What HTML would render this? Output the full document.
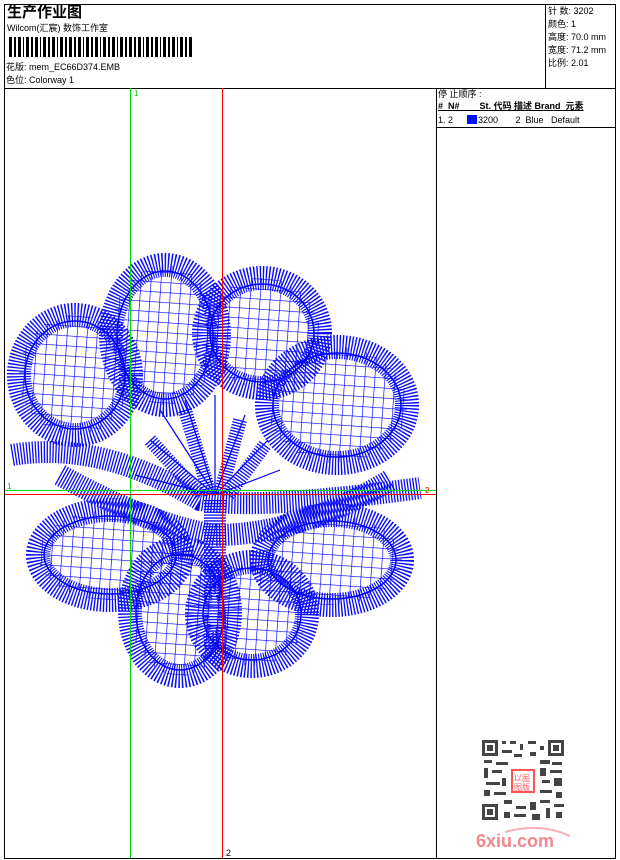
<!DOCTYPE html>
<html><head><meta charset="utf-8"><style>
*{margin:0;padding:0}
body{width:620px;height:860px;background:#fff;position:relative;overflow:hidden;font-family:"Liberation Sans","Noto Sans CJK SC",sans-serif;color:#000}
.t{position:absolute;white-space:nowrap;font-size:9px;line-height:11px}
.l{position:absolute;background:#000}
</style></head><body>
<div class="l" style="left:4px;top:4px;width:612px;height:1px"></div>
<div class="l" style="left:4px;top:4px;width:1px;height:855px"></div>
<div class="l" style="left:615px;top:4px;width:1px;height:855px"></div>
<div class="l" style="left:4px;top:858px;width:612px;height:1px"></div>
<div class="l" style="left:4px;top:88px;width:612px;height:1px"></div>
<div class="l" style="left:545px;top:4px;width:1px;height:84px"></div>
<div class="l" style="left:436px;top:88px;width:1px;height:771px"></div>
<div class="l" style="left:436px;top:127px;width:180px;height:1px"></div>

<div class="t" style="left:7px;top:4px;font-size:15px;line-height:17px;font-weight:bold">生产作业图</div>
<div class="t" style="left:7px;top:23px">Wilcom(汇宸) 数饰工作室</div>
<svg style="position:absolute;left:9px;top:37px" width="185" height="20">
<g fill="#000">
<rect x="0" y="0" width="3" height="20"/><rect x="5" y="0" width="2" height="20"/><rect x="9" y="0" width="3" height="20"/><rect x="14" y="0" width="1" height="20"/><rect x="17" y="0" width="3" height="20"/><rect x="22" y="0" width="2" height="20"/><rect x="26" y="0" width="3" height="20"/><rect x="31" y="0" width="1" height="20"/><rect x="34" y="0" width="3" height="20"/><rect x="39" y="0" width="2" height="20"/><rect x="43" y="0" width="3" height="20"/><rect x="48" y="0" width="1" height="20"/><rect x="51" y="0" width="3" height="20"/><rect x="56" y="0" width="2" height="20"/><rect x="60" y="0" width="3" height="20"/><rect x="65" y="0" width="2" height="20"/><rect x="69" y="0" width="3" height="20"/><rect x="74" y="0" width="1" height="20"/><rect x="77" y="0" width="3" height="20"/><rect x="82" y="0" width="2" height="20"/><rect x="86" y="0" width="3" height="20"/><rect x="91" y="0" width="1" height="20"/><rect x="94" y="0" width="3" height="20"/><rect x="99" y="0" width="2" height="20"/><rect x="103" y="0" width="3" height="20"/><rect x="108" y="0" width="1" height="20"/><rect x="111" y="0" width="3" height="20"/><rect x="116" y="0" width="2" height="20"/><rect x="120" y="0" width="3" height="20"/><rect x="125" y="0" width="2" height="20"/><rect x="129" y="0" width="3" height="20"/><rect x="134" y="0" width="1" height="20"/><rect x="137" y="0" width="3" height="20"/><rect x="142" y="0" width="2" height="20"/><rect x="146" y="0" width="3" height="20"/><rect x="151" y="0" width="1" height="20"/><rect x="154" y="0" width="3" height="20"/><rect x="159" y="0" width="2" height="20"/><rect x="163" y="0" width="3" height="20"/><rect x="168" y="0" width="1" height="20"/><rect x="171" y="0" width="3" height="20"/><rect x="176" y="0" width="2" height="20"/><rect x="180" y="0" width="3" height="20"/>
</g></svg>
<div class="t" style="left:6px;top:62px">花版: mem_EC66D374.EMB</div>
<div class="t" style="left:6px;top:75px">色位: Colorway 1</div>

<div class="t" style="left:548px;top:5px;line-height:13px">针 数: 3202<br>颜色: 1<br>高度: 70.0 mm<br>宽度: 71.2 mm<br>比例: 2.01</div>

<div class="t" style="left:438px;top:89px">停 止顺序 :</div>
<div class="t" style="left:438px;top:101px;font-weight:bold;text-decoration:underline">#&nbsp;&nbsp;N#&nbsp;&nbsp;&nbsp;&nbsp;&nbsp;&nbsp;&nbsp;&nbsp;St.&nbsp;代码 描述 Brand&nbsp;&nbsp;元素</div>
<div class="t" style="left:438px;top:115px">1.&nbsp;2</div>
<div style="position:absolute;left:467px;top:115px;width:10px;height:9px;background:#0010ff"></div>
<div class="t" style="left:478px;top:115px">3200&nbsp;&nbsp;&nbsp;&nbsp;&nbsp;&nbsp;&nbsp;2&nbsp; Blue&nbsp;&nbsp; Default</div>

<svg style="position:absolute;left:0;top:0" width="620" height="860">
<defs>
<pattern id="g" width="10" height="10" patternUnits="userSpaceOnUse" patternTransform="rotate(4)">
<path d="M0 0H10M0 0V10" stroke="#0000ff" stroke-width="1.3" fill="none"/>
</pattern>
</defs>
<g fill="url(#g)" stroke="#0a0aff" stroke-width="24" stroke-dasharray="1.3 1.6">
<ellipse cx="75" cy="375" rx="56" ry="60"/>
<ellipse cx="165" cy="335" rx="54" ry="70"/>
<ellipse cx="262" cy="333" rx="58" ry="55"/>
<ellipse cx="337" cy="405" rx="70" ry="58"/>
<ellipse cx="110" cy="555" rx="72" ry="45"/>
<ellipse cx="180" cy="612" rx="50" ry="64"/>
<ellipse cx="252" cy="614" rx="55" ry="52"/>
<ellipse cx="332" cy="560" rx="70" ry="45"/>
</g>
<g fill="none" stroke="#0000ff" stroke-width="1.5">
<ellipse cx="75" cy="375" rx="50" ry="54"/>
<ellipse cx="165" cy="335" rx="48" ry="64"/>
<ellipse cx="262" cy="333" rx="52" ry="49"/>
<ellipse cx="337" cy="405" rx="64" ry="52"/>
<ellipse cx="110" cy="555" rx="66" ry="39"/>
<ellipse cx="180" cy="612" rx="44" ry="58"/>
<ellipse cx="252" cy="614" rx="49" ry="46"/>
<ellipse cx="332" cy="560" rx="64" ry="39"/>
</g>
<g fill="none" stroke="#0a0aff" stroke-width="22" stroke-dasharray="1.3 1.6">
<path d="M12 455 Q100 440 200 500 Q260 510 420 488"/>
<path d="M60 475 Q150 525 215 535 Q300 535 390 480"/>
<path d="M215 500 V650"/>
</g>
<g stroke="#0000ff" stroke-width="1.2">
<path d="M215 495 L150 440 M215 495 L160 410 M215 495 L185 400 M215 495 L215 395 M215 495 L245 415 M215 495 L268 440 M215 495 L280 470 M215 495 L135 475"/>
</g>
<g stroke="#0a0aff" stroke-width="14" stroke-dasharray="1.3 1.6" fill="none">
<path d="M150 440 L200 495 M185 410 L210 495 M240 420 L220 495 M265 445 L228 495"/>
</g>
<line x1="130.5" y1="88" x2="130.5" y2="858" stroke="#00e000"/>
<line x1="222.5" y1="88" x2="222.5" y2="858" stroke="#ff0000"/>
<line x1="5" y1="490.5" x2="436" y2="490.5" stroke="#00e000"/>
<line x1="5" y1="494.5" x2="436" y2="494.5" stroke="#ff0000"/>
<text x="134" y="96" font-size="8" fill="#00c000" font-family="Liberation Sans">1</text>
<text x="7" y="489" font-size="8" fill="#00c000" font-family="Liberation Sans">1</text>
<text x="425" y="493" font-size="8" fill="#ff0000" font-family="Liberation Sans">2</text>
<text x="226" y="856" font-size="9" fill="#000" font-family="Liberation Sans">2</text>
<g fill="#444">
<rect x="482" y="740" width="82" height="80" fill="#fff"/>
<rect x="482" y="740" width="16" height="16"/><rect x="485" y="743" width="10" height="10" fill="#fff"/><rect x="487" y="745" width="6" height="6"/>
<rect x="548" y="740" width="16" height="16"/><rect x="551" y="743" width="10" height="10" fill="#fff"/><rect x="553" y="745" width="6" height="6"/>
<rect x="482" y="804" width="16" height="16"/><rect x="485" y="807" width="10" height="10" fill="#fff"/><rect x="487" y="809" width="6" height="6"/>
<rect x="502" y="741" width="4" height="3"/><rect x="510" y="741" width="6" height="3"/><rect x="520" y="744" width="3" height="6"/><rect x="528" y="741" width="8" height="3"/><rect x="540" y="746" width="4" height="4"/>
<rect x="502" y="750" width="10" height="3"/><rect x="514" y="754" width="8" height="3"/><rect x="530" y="752" width="6" height="4"/>
<rect x="484" y="760" width="8" height="3"/><rect x="496" y="762" width="12" height="3"/><rect x="540" y="760" width="10" height="4"/><rect x="552" y="762" width="10" height="3"/>
<rect x="484" y="768" width="4" height="10"/><rect x="492" y="770" width="10" height="3"/><rect x="540" y="768" width="6" height="8"/><rect x="550" y="770" width="12" height="3"/>
<rect x="486" y="782" width="14" height="3"/><rect x="502" y="778" width="4" height="8"/><rect x="542" y="780" width="8" height="3"/><rect x="554" y="778" width="8" height="8"/>
<rect x="484" y="790" width="6" height="6"/><rect x="494" y="792" width="12" height="3"/><rect x="540" y="790" width="12" height="3"/><rect x="556" y="792" width="6" height="6"/>
<rect x="504" y="800" width="8" height="4"/><rect x="516" y="806" width="10" height="3"/><rect x="530" y="802" width="6" height="8"/><rect x="540" y="800" width="10" height="3"/>
<rect x="504" y="812" width="6" height="6"/><rect x="514" y="814" width="12" height="3"/><rect x="532" y="814" width="8" height="6"/><rect x="546" y="808" width="4" height="10"/><rect x="554" y="804" width="10" height="3"/><rect x="556" y="812" width="6" height="6"/>
</g>
<rect x="512" y="770" width="22" height="22" fill="#fff" stroke="#f55" stroke-width="2"/>
<text x="514" y="781" font-size="8" fill="#f55" font-family="Noto Sans CJK SC">以图</text>
<text x="514" y="790" font-size="8" fill="#f55" font-family="Noto Sans CJK SC">图版</text>
<path d="M505 832 Q540 822 570 836" stroke="#f7b0b4" stroke-width="2" fill="none"/>
<text x="476" y="847" font-size="18" font-weight="bold" fill="#f2888e" font-family="Liberation Sans">6xiu.com</text>
</svg>
</body></html>
